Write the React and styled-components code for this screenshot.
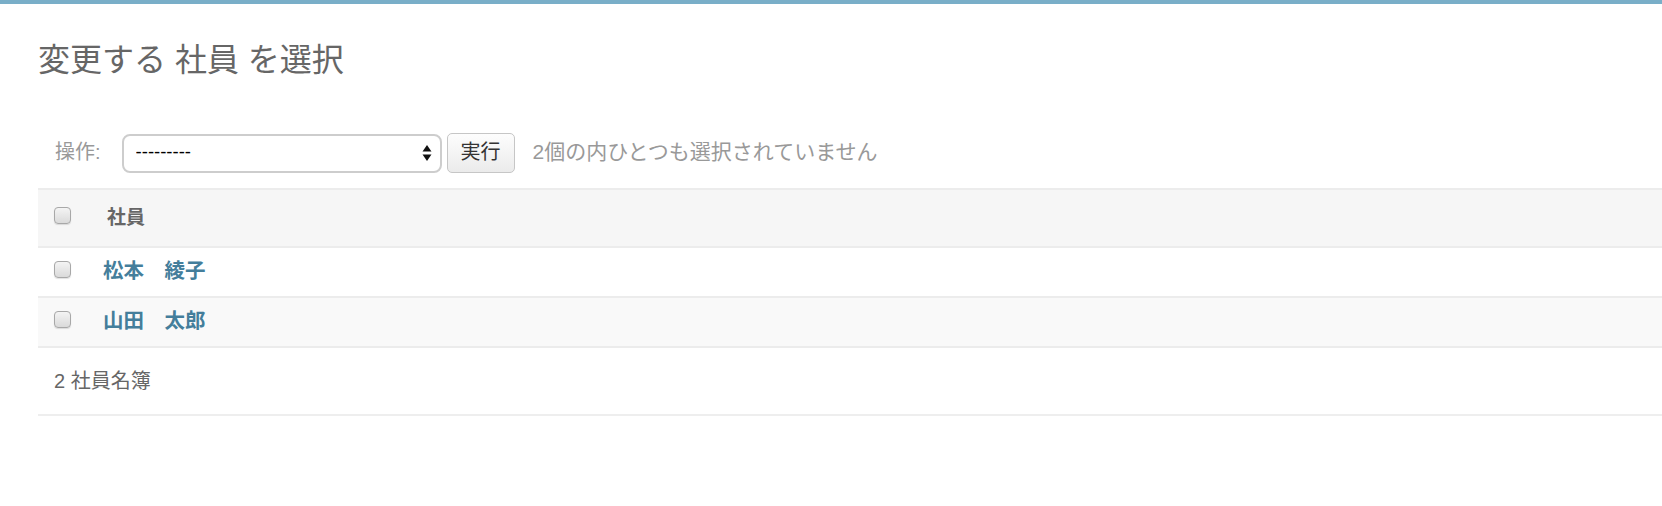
import React from "react";
import styled, { createGlobalStyle } from "styled-components";

const Global = createGlobalStyle`
  html, body { margin: 0; padding: 0; background: #fff; }
  body {
    font-family: "Liberation Sans", "Noto Sans CJK JP", sans-serif;
    color: #333;
    overflow: hidden;
  }
`;

const TopBar = styled.div`
  height: 4px;
  background: #79aec8;
`;

const Content = styled.div`
  padding: 0 0 0 38px;
`;

const Title = styled.h1`
  margin: 36px 0 0;
  height: 40px;
  line-height: 40px;
  font-size: 32px;
  font-weight: 400;
  color: #666;
  white-space: nowrap;
`;

const Actions = styled.div`
  display: flex;
  align-items: center;
  margin: 53px 0 15px;
  height: 40px;
  padding-left: 17px;
`;

const ActionLabel = styled.label`
  font-size: 20px;
  color: #999;
  margin: 0 21px 6px 0;
`;

const SelectWrap = styled.div`
  position: relative;
  width: 320px;
  height: 39px;
  margin-right: 5px;
`;

const Select = styled.select`
  appearance: none;
  -webkit-appearance: none;
  width: 100%;
  height: 100%;
  box-sizing: border-box;
  border: 2px solid #cdcdcd;
  border-radius: 8px;
  background: #fff;
  padding: 0 30px 4px 12px;
  font-family: "Liberation Sans", "Noto Sans CJK JP", sans-serif;
  font-size: 18.5px;
  color: #000;
  outline: none;
`;

const Arrows = styled.svg`
  position: absolute;
  right: 10px;
  top: 50%;
  transform: translateY(-50%);
  pointer-events: none;
`;

const GoButton = styled.button`
  width: 68px;
  height: 40px;
  box-sizing: border-box;
  border: 1px solid #c6c6c6;
  border-radius: 5px;
  background: linear-gradient(#fdfdfd, #ebebeb);
  font-family: "Liberation Sans", "Noto Sans CJK JP", sans-serif;
  font-size: 20px;
  color: #333;
  padding: 0 0 5px;
  margin-right: 18px;
`;

const Counter = styled.span`
  font-size: 21px;
  color: #999;
  white-space: nowrap;
  margin-bottom: 6px;
`;

const Table = styled.table`
  width: 100%;
  border-collapse: collapse;
  border-bottom: 2px solid #dcdcdc;
`;

const HeadRow = styled.tr`
  background: #f6f6f6;
  border-top: 2px solid #ececec;
  border-bottom: 2px solid #ececec;
`;

const Row = styled.tr`
  background: ${(p) => (p.$alt ? "#f9f9f9" : "#fff")};
  border-bottom: 2px solid #ececec;
`;

const CheckCell = styled.td`
  width: 17px;
  padding: 0 16px 5px;
  vertical-align: middle;
  height: ${(p) => p.$h - 5}px;
  box-sizing: content-box;
`;

const HeadCell = styled.th`
  text-align: left;
  padding: 0 0 6px 20px;
  font-size: 19px;
  font-weight: 700;
  color: #666;
  vertical-align: middle;
`;

const NameCell = styled.td`
  padding: 0 0 6px 16px;
  vertical-align: middle;
`;

const NameLink = styled.a`
  font-size: 20.5px;
  font-weight: 700;
  color: #447e9b;
  text-decoration: none;
  white-space: nowrap;
`;

const Check = styled.input.attrs({ type: "checkbox" })`
  appearance: none;
  -webkit-appearance: none;
  display: block;
  margin: 0;
  width: 17px;
  height: 17px;
  box-sizing: border-box;
  border: 1px solid #a8a8a8;
  border-radius: 4px;
  background: linear-gradient(#f4f4f4, #dadada);
  box-shadow: 0 1px 1px rgba(0, 0, 0, 0.12);
`;

const Paginator = styled.p`
  margin: 0;
  padding: 20px 0 20px 16px;
  line-height: 26px;
  font-size: 20px;
  color: #666;
  border-bottom: 2px solid #eee;
`;

const people = ["松本　綾子", "山田　太郎"];

export default function App() {
  return (
    <>
      <Global />
      <TopBar />
      <Content>
        <Title>変更する 社員 を選択</Title>
        <Actions>
          <ActionLabel>操作:</ActionLabel>
          <SelectWrap>
            <Select defaultValue="">
              <option value="">---------</option>
            </Select>
            <Arrows width="10" height="20" viewBox="0 0 10 20">
              <path d="M5 2 L9.5 8.5 H0.5 Z" fill="#111" />
              <path d="M5 18 L9.5 11.5 H0.5 Z" fill="#111" />
            </Arrows>
          </SelectWrap>
          <GoButton>実行</GoButton>
          <Counter>2個の内ひとつも選択されていません</Counter>
        </Actions>
        <Table>
          <thead>
            <HeadRow>
              <CheckCell as="th" $h={56}>
                <Check />
              </CheckCell>
              <HeadCell>社員</HeadCell>
            </HeadRow>
          </thead>
          <tbody>
            {people.map((name, i) => (
              <Row key={name} $alt={i % 2 === 1}>
                <CheckCell $h={48}>
                  <Check />
                </CheckCell>
                <NameCell>
                  <NameLink href="#">{name}</NameLink>
                </NameCell>
              </Row>
            ))}
          </tbody>
        </Table>
        <Paginator>2 社員名簿</Paginator>
      </Content>
    </>
  );
}
